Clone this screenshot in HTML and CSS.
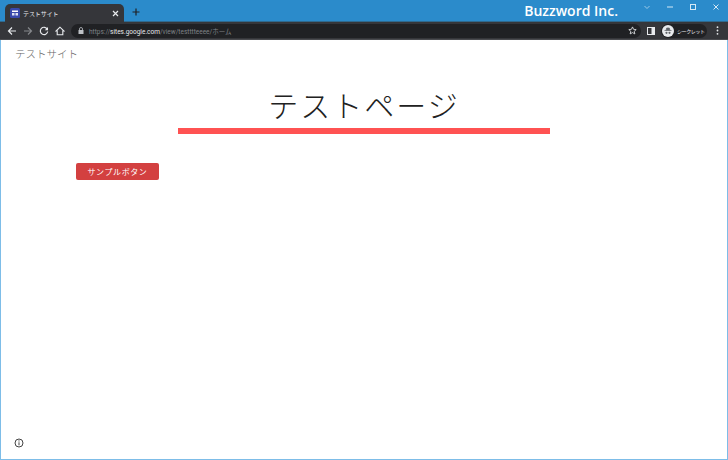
FILE: index.html

```html
<!DOCTYPE html>
<html lang="ja">
<head>
  <meta charset="UTF-8" />
  <title>テストサイト</title>
  <link rel="stylesheet" href="styles.css">
</head>
<body>
  <div class="window">
    <div class="titlebar">
      <div class="tab">
        <svg class="favicon" width="10" height="10" viewBox="0 0 10 10">
          <rect width="10" height="10" rx="1.500" fill="#3949ab"/>
          <rect x="2" y="2.500" width="6" height="1.500" fill="#fff"/>
          <rect x="2" y="5" width="2.500" height="2.500" fill="#dfe3f5"/>
          <rect x="5.500" y="5" width="2.500" height="2.500" fill="#dfe3f5"/>
        </svg>
        <span class="tab-title">テストサイト</span>
        <svg class="tab-close" width="7" height="7" viewBox="0 0 7 7">
          <path d="M1 1l5 5M6 1l-5 5" stroke="#e8eaed" stroke-width="1.200"/>
        </svg>
      </div>
      <svg class="new-tab" width="8" height="8" viewBox="0 0 8 8">
        <path d="M4 .5v7M.5 4h7" stroke="#202124" stroke-width="1.200"/>
      </svg>
      <div class="brand">Buzzword Inc.</div>
      <div class="win-buttons">
        <svg width="8" height="8" viewBox="0 0 8 8"><path d="M1.500 3l2.500 2.500L6.500 3" fill="none" stroke="#a8d0ea" stroke-width=".9"/></svg>
        <svg width="8" height="8" viewBox="0 0 8 8"><path d="M1 4h6" stroke="#d5e8f5" stroke-width="1"/></svg>
        <svg width="8" height="8" viewBox="0 0 8 8"><rect x="1.500" y="1.500" width="5" height="5" fill="none" stroke="#d5e8f5" stroke-width="1"/></svg>
        <svg width="8" height="8" viewBox="0 0 8 8"><path d="M1.500 1.500l5 5M6.500 1.500l-5 5" stroke="#d5e8f5" stroke-width="1"/></svg>
      </div>
    </div>

    <div class="toolbar">
      <div class="nav-icons">
        <svg width="10" height="10" viewBox="0 0 10 10"><path d="M9 5H1.500M5 1.500L1.500 5 5 8.500" fill="none" stroke="#e8eaed" stroke-width="1.200"/></svg>
        <svg width="10" height="10" viewBox="0 0 10 10"><path d="M1 5h7.500M5 1.500L8.500 5 5 8.500" fill="none" stroke="#85878b" stroke-width="1.200"/></svg>
        <svg width="10" height="10" viewBox="0 0 10 10"><path d="M8.300 3.200A3.700 3.700 0 1 0 8.700 5.500" fill="none" stroke="#e8eaed" stroke-width="1.200"/><path d="M9 1v3.200H5.800z" fill="#e8eaed"/></svg>
        <svg width="10" height="10" viewBox="0 0 10 10"><path d="M5 1.200L1 5h1.200v3.800h5.600V5H9z" fill="none" stroke="#e8eaed" stroke-width="1.100"/></svg>
      </div>
      <div class="omnibox">
        <svg width="6" height="7" viewBox="0 0 6 7"><rect x=".5" y="3" width="5" height="4" fill="#bdc1c6"/><path d="M1.500 3V2a1.500 1.500 0 0 1 3 0v1" fill="none" stroke="#bdc1c6" stroke-width=".8"/></svg>
        <span class="url">https://<b>sites.google.com</b>/view/testttteeee/ホーム</span>
        <svg class="star" width="9" height="9" viewBox="0 0 10 10"><path d="M5 1l1.200 2.700 2.900.3-2.200 1.900.7 2.900L5 7.300 2.400 8.800l.7-2.900L.9 4l2.900-.3z" fill="none" stroke="#e8eaed" stroke-width=".9"/></svg>
      </div>
      <svg class="side-panel" width="8" height="8" viewBox="0 0 8 8"><rect x=".5" y=".5" width="7" height="7" fill="none" stroke="#e8eaed"/><rect x="4.500" y="1" width="3" height="6" fill="#e8eaed"/></svg>
      <div class="profile">
        <svg class="avatar" width="12" height="12" viewBox="0 0 12 12">
          <circle cx="6" cy="6" r="6" fill="#e8eaed"/>
          <path d="M2.500 5.500h7M4 5.500l.7-2.500h2.600L8 5.500" fill="#5f6368" stroke="#5f6368" stroke-width=".7"/>
          <circle cx="4.500" cy="7.800" r="1.100" fill="#5f6368"/>
          <circle cx="7.500" cy="7.800" r="1.100" fill="#5f6368"/>
        </svg>
        <span>シークレット</span>
      </div>
      <svg class="menu" width="3" height="9" viewBox="0 0 3 9"><circle cx="1.500" cy="1.200" r=".9" fill="#e8eaed"/><circle cx="1.500" cy="4.500" r=".9" fill="#e8eaed"/><circle cx="1.500" cy="7.800" r=".9" fill="#e8eaed"/></svg>
    </div>

    <div class="page">
      <div class="site-name">テストサイト</div>
      <h1 class="page-title">テストページ</h1>
      <div class="title-rule"></div>
      <a class="sample-btn">サンプルボタン</a>
      <svg class="info" width="10" height="10" viewBox="0 0 10 10">
        <circle cx="5" cy="5" r="4" fill="none" stroke="#444" stroke-width="1"/>
        <path d="M5 4.300v3" stroke="#444" stroke-width="1"/>
        <circle cx="5" cy="2.900" r=".6" fill="#444"/>
      </svg>
    </div>
  </div>
</body>
</html>
```

FILE: styles.css

```css
html, body {
  margin: 0;
  height: 100%;
}
body {
  font-family: "Noto Sans CJK JP", "Noto Sans", sans-serif;
  background: #fff;
}
.window {
  height: 460px;
  box-sizing: border-box;
  display: flex;
  flex-direction: column;
  border: 1px solid #7dbde8;
  border-top: none;
}
.titlebar {
  height: 22px;
  flex: none;
  box-sizing: border-box;
  display: flex;
  align-items: flex-end;
  background: #2b8bcb;
  border-bottom: 1px solid #2f6a90;
  margin: 0 -1px;
  padding-left: 5px;
}
.tab {
  width: 119px;
  height: 18px;
  margin-bottom: -1px;
  box-sizing: border-box;
  display: flex;
  align-items: center;
  padding: 0 5px;
  background: #35363a;
  border-radius: 5px 5px 0 0;
}
.tab-title {
  margin-left: 3px;
  flex: 1;
  font-size: 6px;
  letter-spacing: -.1px;
  color: #e8eaed;
}
.new-tab {
  margin: 0 0 5px 8px;
}
.brand {
  margin-left: auto;
  margin-right: 25px;
  align-self: center;
  font-family: "Open Sans", sans-serif;
  font-size: 14px;
  font-weight: 600;
  color: #fff;
}
.win-buttons {
  align-self: flex-start;
  display: flex;
  gap: 15px;
  padding: 3px 8px 0 0;
}
.toolbar {
  height: 18px;
  flex: none;
  box-sizing: border-box;
  display: flex;
  align-items: center;
  background: #35363a;
  border-bottom: 1px solid #4a4b4f;
  margin: 0 -1px;
  padding-left: 7px;
}
.nav-icons {
  display: flex;
  gap: 6px;
}
.omnibox {
  margin-left: 6px;
  width: 570px;
  height: 14px;
  box-sizing: border-box;
  display: flex;
  align-items: center;
  gap: 5px;
  padding: 0 4px 0 7px;
  background: #202124;
  border-radius: 7px;
}
.url {
  flex: 1;
  font-family: "Roboto", "Noto Sans CJK JP", sans-serif;
  font-size: 6.500px;
  color: #7f8286;
}
.url b {
  font-weight: 400;
  color: #e8eaed;
}
.side-panel {
  margin-left: 6px;
  flex: none;
}
.profile {
  margin-left: 6px;
  width: 46px;
  height: 14px;
  flex: none;
  box-sizing: border-box;
  display: flex;
  align-items: center;
  gap: 3px;
  padding-left: 1px;
  background: #202124;
  border-radius: 7px;
  font-size: 5px;
  letter-spacing: -.4px;
  color: #e8eaed;
  white-space: nowrap;
}
.avatar {
  flex: none;
}
.menu {
  margin-left: 9px;
  flex: none;
}
.page {
  flex: 1;
  display: flex;
  flex-direction: column;
  background: #fff;
}
.site-name {
  margin: 6px 0 0 14px;
  font-size: 10.500px;
  font-weight: 300;
  line-height: 16px;
  color: #666;
}
.page-title {
  margin: 21px 0 0;
  text-align: center;
  font-size: 30px;
  letter-spacing: 2px;
  line-height: 42px;
  font-weight: 300;
  color: #212121;
}
.title-rule {
  align-self: center;
  width: 372px;
  height: 6px;
  margin-top: 3px;
  background: #ff5252;
}
.sample-btn {
  align-self: flex-start;
  width: 83px;
  height: 17px;
  margin: 29px 0 0 75px;
  display: flex;
  align-items: center;
  justify-content: center;
  background: #d34040;
  border-radius: 2px;
  font-size: 8px;
  letter-spacing: .6px;
  color: #fff;
}
.info {
  margin: auto 0 11px 13px;
}
```
